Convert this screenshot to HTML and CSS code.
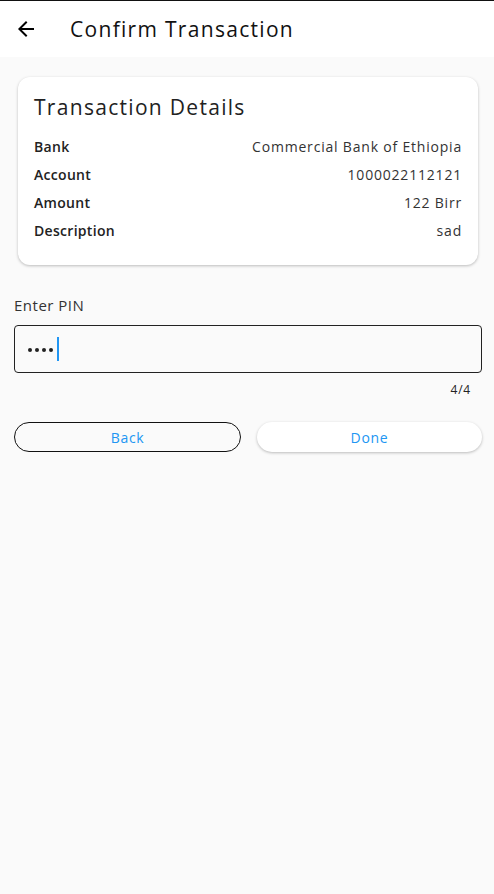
FILE: index.html
```html
<!DOCTYPE html>
<html>
<head>
<meta charset="utf-8">
<link rel="stylesheet" href="styles.css">
</head>
<body>
<div class="topline"></div>
<header class="appbar">
  <svg class="back-icon" viewBox="0 0 24 24" width="24" height="24"><path d="M20 11H7.83l5.59-5.59L12 4l-8 8 8 8 1.41-1.41L7.83 13H20v-2z" fill="#000"/></svg>
  <h1 class="appbar-title">Confirm Transaction</h1>
</header>
<main class="content">
  <section class="card">
    <h2 class="card-title">Transaction Details</h2>
    <div class="rows">
      <div class="row"><span class="label">Bank</span><span class="value">Commercial Bank of Ethiopia</span></div>
      <div class="row"><span class="label">Account</span><span class="value">1000022112121</span></div>
      <div class="row"><span class="label">Amount</span><span class="value">122 Birr</span></div>
      <div class="row"><span class="label">Description</span><span class="value">sad</span></div>
    </div>
  </section>
  <div class="pin-label">Enter PIN</div>
  <div class="pin-box" aria-label="••••"><span class="dot"></span><span class="dot"></span><span class="dot"></span><span class="dot"></span><span class="caret"></span></div>
  <div class="counter">4/4</div>
  <div class="buttons">
    <button class="btn btn-outline">Back</button>
    <button class="btn btn-raised">Done</button>
  </div>
</main>
</body>
</html>
```
FILE: styles.css
```css
* { box-sizing: border-box; }
html, body { margin: 0; padding: 0; }
body {
  background: #fafafa;
  font-family: "Open Sans", "Noto Sans", sans-serif;
  color: #1c1c1c;
  width: 494px;
  height: 894px;
  overflow: hidden;
}
.topline { height: 1px; background: #111; }
.appbar {
  height: 56px;
  background: #fff;
  display: flex;
  align-items: center;
  padding-left: 14px;
}
.back-icon { display: block; }
.appbar-title {
  margin: 0 0 0 32px;
  font-size: 21px;
  font-weight: 400;
  color: #111;
  letter-spacing: 1.3px;
}
.content { padding: 20px 12px 0 14px; }
.card {
  margin: 0 4px;
  background: #fff;
  border-radius: 12px;
  box-shadow: 0 1px 3px rgba(0,0,0,0.25);
  padding: 14px 16px 20px 16px;
  height: 188px;
}
.card-title {
  margin: 0;
  font-size: 21px;
  font-weight: 400;
  color: #222;
  line-height: 32px;
  letter-spacing: 1.3px;
}
.rows { margin-top: 9px; display: flex; flex-direction: column; }
.row {
  display: flex;
  justify-content: space-between;
  height: 28px;
  align-items: center;
  font-size: 14px;
}
.label { font-weight: 600; color: #222; letter-spacing: 0.3px; }
.value { font-weight: 400; color: #333; letter-spacing: 0.8px; }
.pin-label {
  margin-top: 29px;
  font-size: 15px;
  color: #333;
  line-height: 22px;
  letter-spacing: 0.5px;
}
.pin-box {
  margin-top: 9px;
  height: 48px;
  border: 1px solid #222;
  border-radius: 4px;
  display: flex;
  align-items: center;
  padding-left: 13px;
  gap: 3px;
}
.dot { width: 4px; height: 4px; border-radius: 50%; background: #222; margin-top: 1px; }
.caret { width: 2px; height: 24px; background: #2196f3; margin-left: 1px; }
.counter {
  text-align: right;
  font-size: 12px;
  color: #222;
  padding-right: 11px;
  margin-top: 9px;
  line-height: 16px;
  letter-spacing: 0.8px;
}
.buttons {
  margin-top: 24px;
  display: flex;
  gap: 16px;
}
.btn {
  flex: 1;
  height: 30px;
  border-radius: 15px;
  font-family: inherit;
  font-size: 14px;
  color: #2196f3;
  background: #fff;
  letter-spacing: 0.7px;
  cursor: pointer;
}
.btn-outline { border: 1px solid #111; background: #fafafa; }
.btn-raised { border: none; box-shadow: 0 1px 3px rgba(0,0,0,0.25); }
```
